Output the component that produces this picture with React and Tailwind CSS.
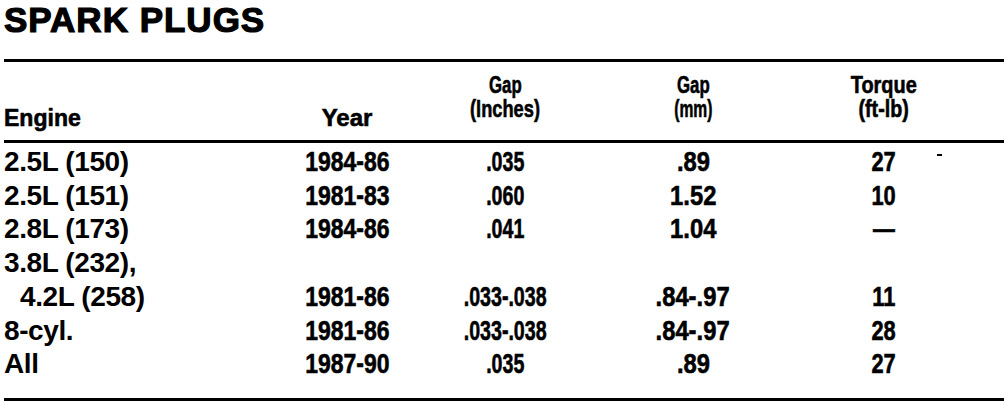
import React from 'react';

const rows = [
  { engine: '2.5L (150)', year: '1984-86', inch: '.035', mm: '.89', torque: '27', speck: true },
  { engine: '2.5L (151)', year: '1981-83', inch: '.060', mm: '1.52', torque: '10' },
  { engine: '2.8L (173)', year: '1984-86', inch: '.041', mm: '1.04', torque: '—' },
  { engine: '3.8L (232),', year: '', inch: '', mm: '', torque: '' },
  { engine: '4.2L (258)', indent: true, year: '1981-86', inch: '.033-.038', mm: '.84-.97', torque: '11' },
  { engine: '8-cyl.', year: '1981-86', inch: '.033-.038', mm: '.84-.97', torque: '28' },
  { engine: 'All', year: '1987-90', inch: '.035', mm: '.89', torque: '27' },
];

const cols = 'grid grid-cols-[286px_114px_202px_174px_208px]';
const heavy = '[-webkit-text-stroke:0.6px_black]';

export default function App() {
  return (
    <div className="w-[1008px] h-[404px] overflow-hidden bg-white text-black font-['Liberation_Sans',Arial,sans-serif]">
      <h1 className="pl-1 text-[35px] leading-[40px] font-bold tracking-[1px] [-webkit-text-stroke:1.2px_black]">
        SPARK PLUGS
      </h1>
      <div className="mt-[19px] mx-1 h-[3px] bg-black" />

      <div className={`${cols} mt-[11px] px-1 text-[24px] leading-[24px] font-bold ${heavy}`}>
        <div className="flex items-end">
          <span className="inline-block origin-left scale-x-[0.96] translate-y-[9px]">Engine</span>
        </div>
        <div className="flex items-end justify-center">
          <span className="inline-block translate-y-[9px]">Year</span>
        </div>
        <div className="flex flex-col items-center">
          <span className="inline-block scale-x-[0.7]">Gap</span>
          <span className="inline-block scale-x-[0.76]">(Inches)</span>
        </div>
        <div className="flex flex-col items-center">
          <span className="inline-block scale-x-[0.7]">Gap</span>
          <span className="inline-block scale-x-[0.65]">(mm)</span>
        </div>
        <div className="flex flex-col items-center">
          <span className="inline-block scale-x-[0.83]">Torque</span>
          <span className="inline-block scale-x-[0.82]">(ft-lb)</span>
        </div>
      </div>
      <div className="mt-[19px] mx-1 h-[3px] bg-black" />

      <div className="mt-[2px] px-1 text-[28px] leading-[33.7px] font-bold">
        {rows.map((r, i) => (
          <div key={i} className={cols}>
            <div className={`tracking-[-0.4px] ${r.indent ? 'pl-[16px]' : ''}`}>{r.engine}</div>
            <div className={`text-center ${heavy}`}>
              <span className="inline-block scale-x-[0.82]">{r.year}</span>
            </div>
            <div className={`text-center ${heavy}`}>
              <span className="inline-block scale-x-[0.7]">{r.inch}</span>
            </div>
            <div className={`text-center ${heavy}`}>
              <span className="inline-block scale-x-[0.85]">{r.mm}</span>
            </div>
            <div className={`relative text-center ${heavy}`}>
              <span className="inline-block scale-x-[0.78]">{r.torque}</span>
              {r.speck && <span className="absolute left-[157px] top-[9px] w-[5px] h-[2px] bg-black" />}
            </div>
          </div>
        ))}
      </div>
      <div className="mt-[17px] mx-1 h-[3px] bg-black" />
    </div>
  );
}
